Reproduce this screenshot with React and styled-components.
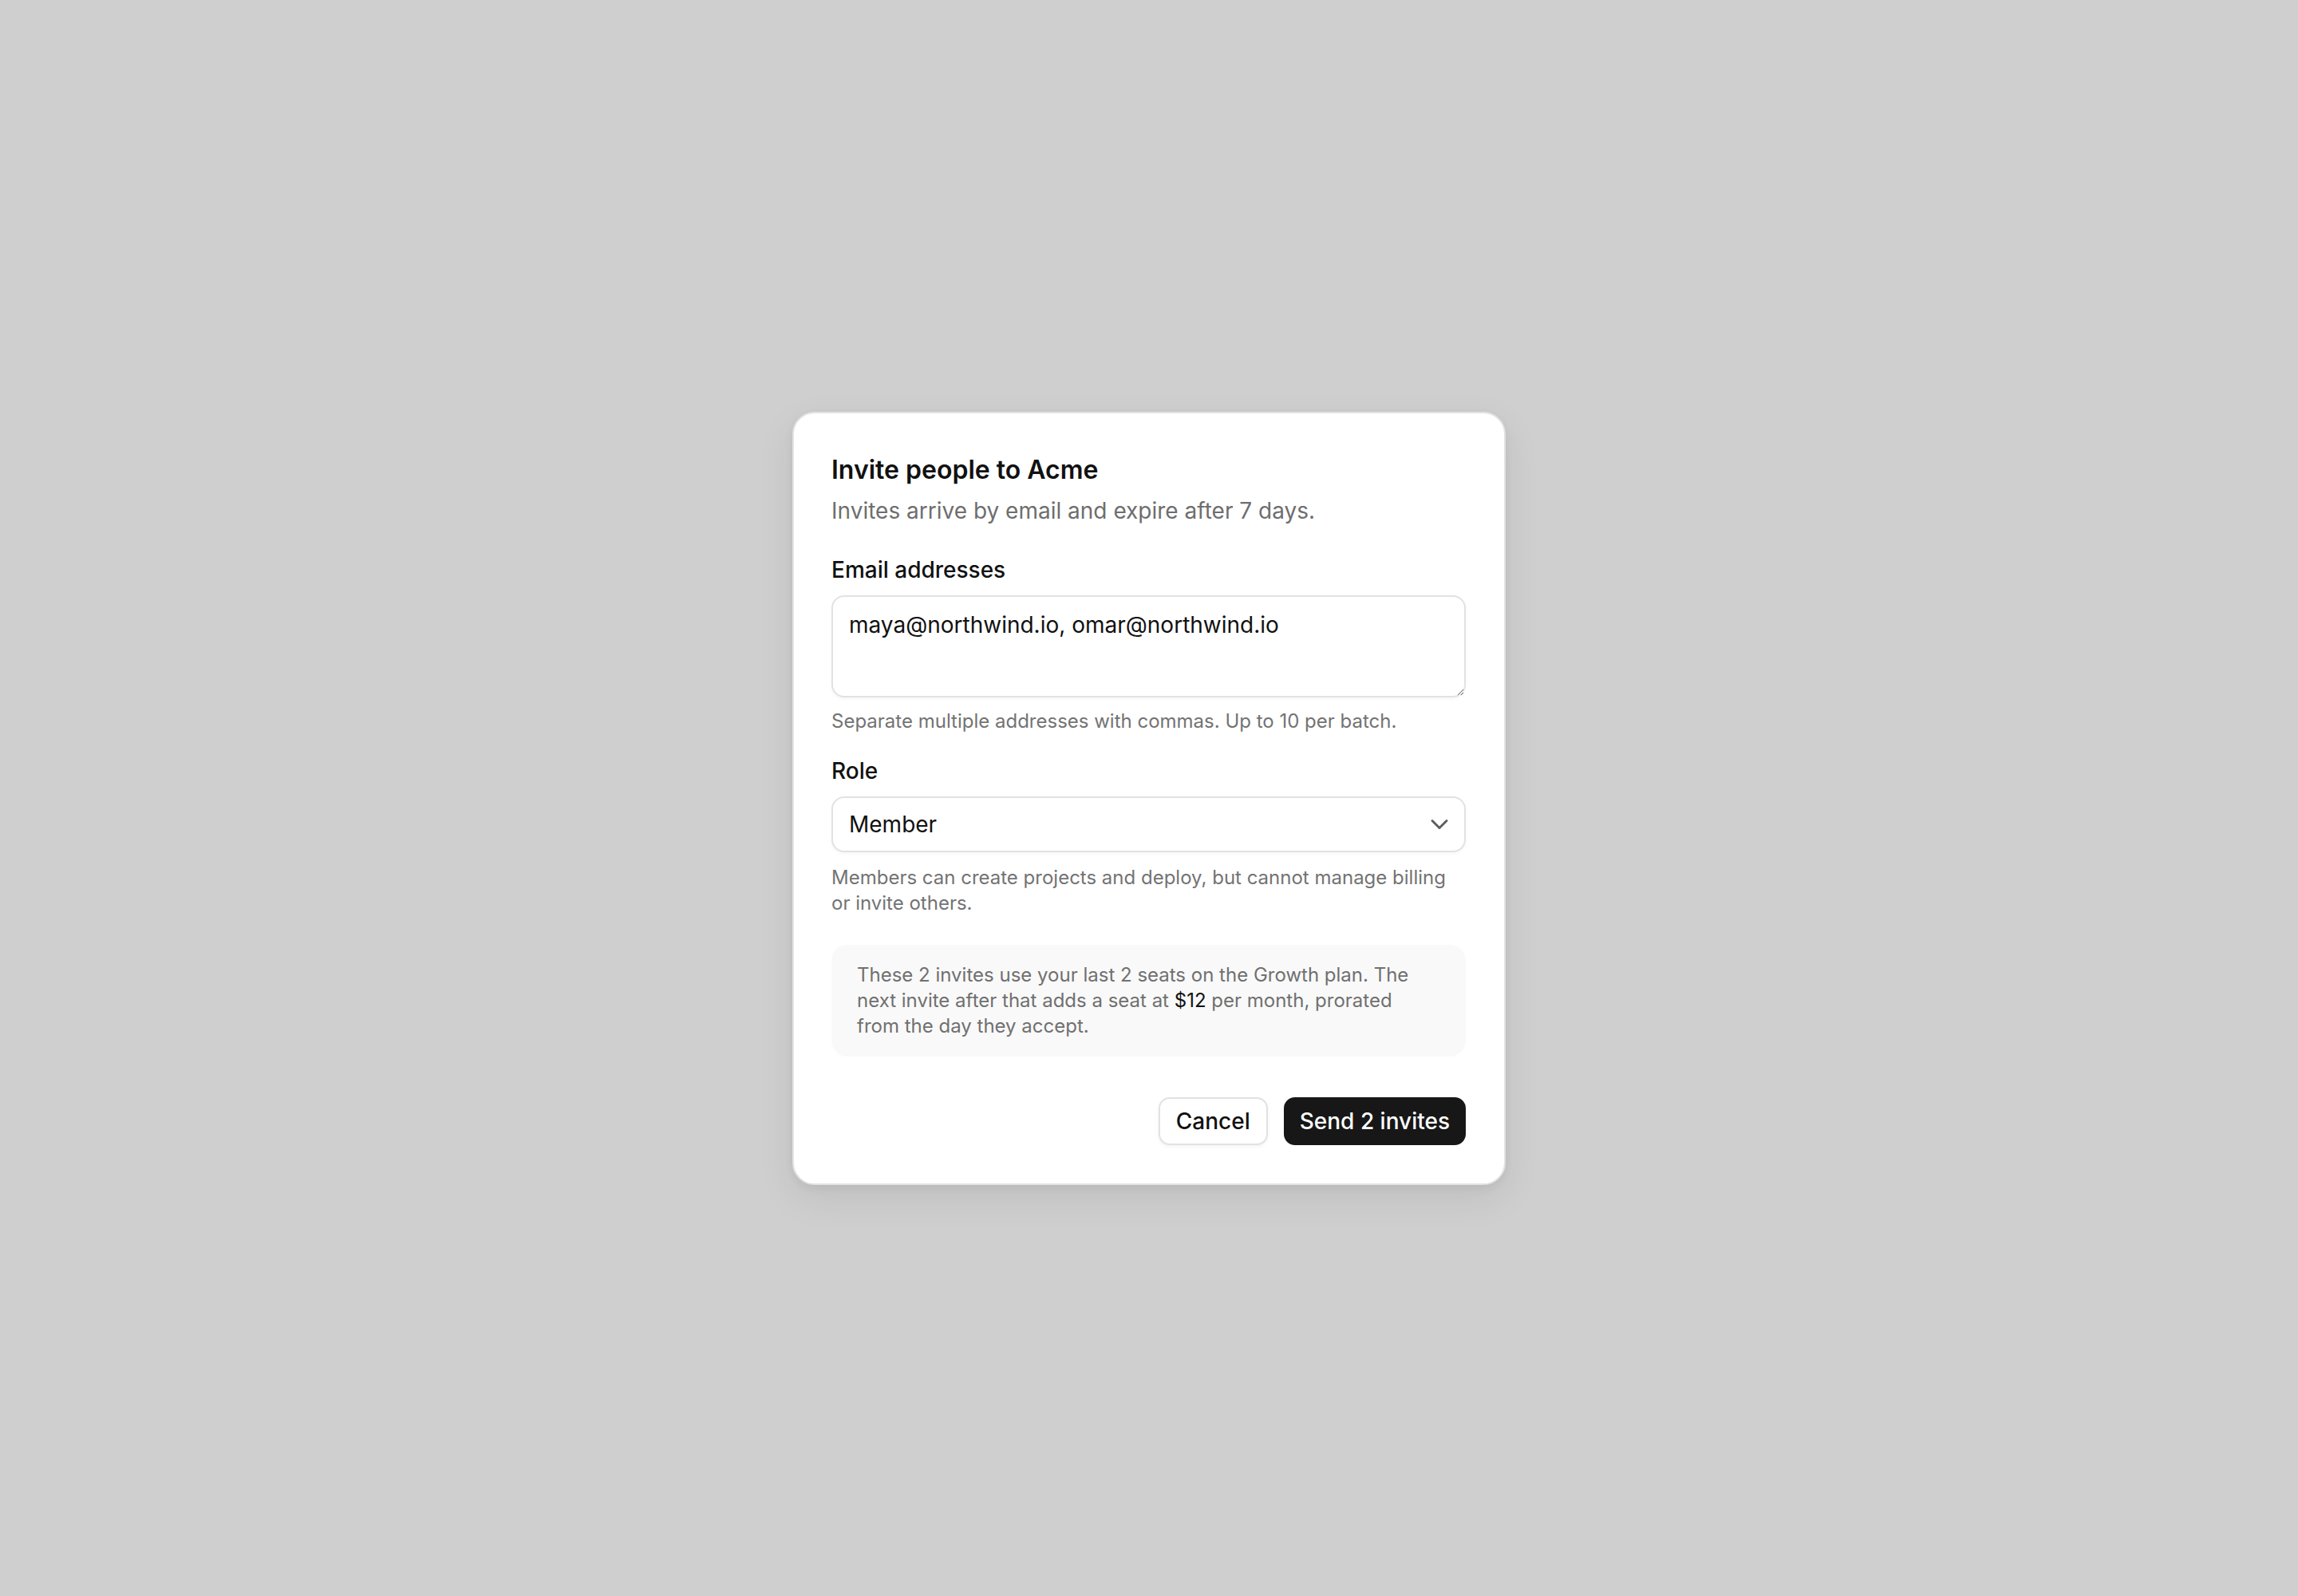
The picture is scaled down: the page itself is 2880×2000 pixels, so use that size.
import React from 'react'
import styled, { createGlobalStyle } from 'styled-components'
import { ChevronDown } from 'lucide-react'

// styled----------------------------------

const Global = createGlobalStyle`
  html, body {
    margin: 0;
    padding: 0;
    background: #cfcfcf;
    font-family: Inter, "Noto Sans", sans-serif;
    -webkit-font-smoothing: antialiased;
  }
  * { box-sizing: border-box; }
`

const Backdrop = styled.div`
  min-height: 100vh;
  display: flex;
  align-items: center;
  justify-content: center;
`

const Dialog = styled.form`
  width: 894px;
  padding: 48px 48px 48px 47px;
  background: #ffffff;
  border: 2px solid #e3e3e3;
  border-radius: 28px;
  box-shadow: 0 16px 48px rgba(0, 0, 0, 0.08), 0 4px 12px rgba(0, 0, 0, 0.05);
  display: flex;
  flex-direction: column;
`

const Title = styled.h2`
  margin: 0;
  font-size: 32px;
  line-height: 46px;
  font-weight: 600;
  color: #111111;
`

const Subtitle = styled.p`
  margin: 8px 0 0;
  font-size: 28px;
  line-height: 40px;
  color: #6e6e6e;
`

const Field = styled.div`
  display: flex;
  flex-direction: column;
  margin-top: ${p => p.$top}px;
`

const Label = styled.label`
  font-size: 28px;
  line-height: 40px;
  font-weight: 500;
  color: #111111;
  margin-bottom: 12px;
`

const _inputBase = `
  width: 100%;
  font-family: inherit;
  font-size: 28px;
  line-height: 40px;
  color: #111111;
  background: #ffffff;
  border: 2px solid #e2e2e2;
  border-radius: 16px;
  box-shadow: 0 2px 4px rgba(0, 0, 0, 0.04);
  outline: none;
`

const Textarea = styled.textarea`
  ${_inputBase}
  display: block;
  height: 128px;
  padding: 15px 20px 13px;
  resize: vertical;
`

const SelectBox = styled.div`
  ${_inputBase}
  height: 70px;
  padding: 0 13px 0 20px;
  display: flex;
  align-items: center;
  justify-content: space-between;
  cursor: pointer;

  svg { color: #5f5f5f; }
`

const Hint = styled.p`
  margin: ${p => p.$gap || 14}px 0 0;
  font-size: 24px;
  line-height: 32px;
  color: #737373;
`

const Notice = styled.div`
  margin-top: 36px;
  padding: 22px 38px 22px 32px;
  background: #f9f9f9;
  border-radius: 20px;
  font-size: 24px;
  line-height: 32px;
  color: #707070;
`

const Price = styled.span`
  color: #111111;
`

const Actions = styled.div`
  margin-top: 51px;
  display: flex;
  justify-content: flex-end;
  gap: 20px;
`

const Button = styled.button`
  height: 60px;
  padding: 0 ${p => (p.$primary ? 18 : 20)}px;
  font-family: inherit;
  font-size: 28px;
  font-weight: 500;
  border-radius: 14px;
  cursor: pointer;
  border: 2px solid ${p => (p.$primary ? '#171717' : '#e2e2e2')};
  background: ${p => (p.$primary ? '#171717' : '#ffffff')};
  color: ${p => (p.$primary ? '#ffffff' : '#111111')};
  box-shadow: ${p => (p.$primary ? 'none' : '0 2px 4px rgba(0,0,0,0.05)')};
`

// component-------------------------------

const App = () => {
  return <Backdrop>
    <Global />
    <Dialog onSubmit={e => e.preventDefault()}>
      <Title>Invite people to Acme</Title>
      <Subtitle>Invites arrive by email and expire after 7 days.</Subtitle>

      <Field $top={34}>
        <Label htmlFor='emails'>Email addresses</Label>
        <Textarea
          id='emails'
          defaultValue='maya@northwind.io, omar@northwind.io'
        />
        <Hint>Separate multiple addresses with commas. Up to 10 per batch.</Hint>
      </Field>

      <Field $top={26}>
        <Label>Role</Label>
        <SelectBox>
          <span>Member</span>
          <ChevronDown size={36} strokeWidth={2} />
        </SelectBox>
        <Hint $gap={16}>Members can create projects and deploy, but cannot manage billing or invite others.</Hint>
      </Field>

      <Notice>
        These 2 invites use your last 2 seats on the Growth plan. The next invite after
        that adds a seat at <Price>$12</Price> per month, prorated from the day they accept.
      </Notice>

      <Actions>
        <Button type='button'>Cancel</Button>
        <Button type='submit' $primary>Send 2 invites</Button>
      </Actions>
    </Dialog>
  </Backdrop>
}

export default App
